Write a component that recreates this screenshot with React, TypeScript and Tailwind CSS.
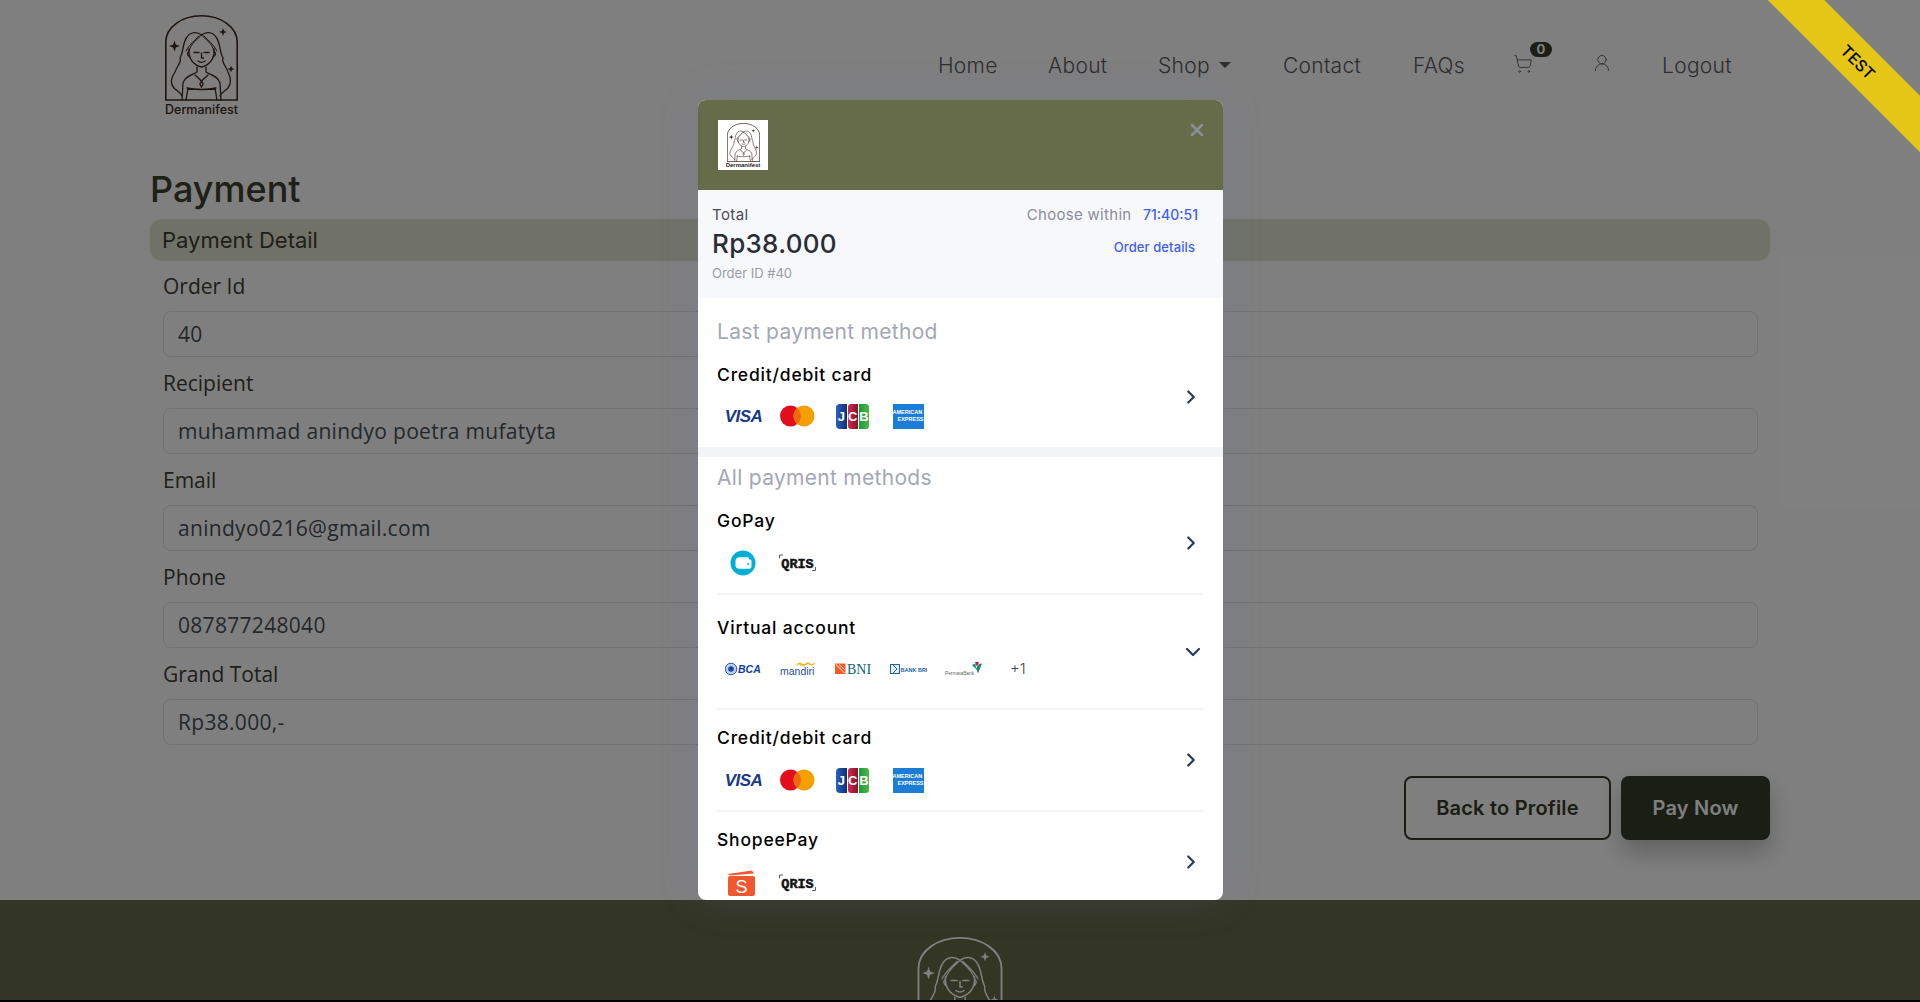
import type { ReactNode } from 'react';
import { ChevronDown, ChevronRight, ShoppingCart, UserRound, X } from 'lucide-react';

function Sparkle({ x, y, r }: { x: number; y: number; r: number }) {
  const k = r * 0.25;
  return (
    <path
      d={`M${x} ${y - r}L${x + k} ${y - k}L${x + r} ${y}L${x + k} ${y + k}L${x} ${y + r}L${x - k} ${y + k}L${x - r} ${y}L${x - k} ${y - k}Z`}
      fill="currentColor"
      stroke="none"
    />
  );
}

function Logo({ className }: { className: string }) {
  return (
    <svg viewBox="0 0 73 86" fill="none" stroke="currentColor" strokeWidth="1.3" strokeLinecap="round" className={className}>
      <path strokeWidth="1.6" d="M.8 85V27C.8 12 17 .8 36.5.8S72.2 12 72.2 27V85M0 85H73" />
      <Sparkle x={9.500} y={31} r={5.500} />
      <Sparkle x={58} y={17} r={4} />
      <Sparkle x={66} y={54} r={3.600} />
      <path d="M36.500 20C33 17 26 16 22 22 17 29 19 36 15 43 17 47 12 51 10 57 6 63 5 69 9 73 12 76 15 77 17 81" />
      <path d="M36.500 20C40 17 47 16 51 22 56 29 54 36 58 43 56 47 61 51 63 57 66 63 66 69 63 73 60 76 57 77 55 81" />
      <path d="M36.500 20C33 24 26 28 24 36M36.500 20C40 24 47 28 49 36M34 21C30 25 24 30 21 36M39 21C43 25 49 30 52 36" strokeWidth="1" />
      <path d="M24 34C23 43 28 50 36.500 52 45 50 50 43 49 34" />
      <path d="M24 37C22 37 22 41 25 42M49 37C51 37 51 41 48 42" />
      <path d="M29 37.500H34M39 37.500H44M36.500 38V43H38.500M33 46C35 47.500 38 47.500 40 46" />
      <path d="M32 52V57C27 60 20 61 18 68L17 85M41 52V57C46 60 53 61 55 68L56 85" />
      <path d="M30 60L36.500 66 43 60M36.500 66L34.800 69 36.500 72 38.200 69Z" />
      <path d="M22 73C30 75 43 75 51 73M23 73L21 85M50 73L52 85" />
    </svg>
  );
}

function Visa() {
  return (
    <svg viewBox="0 0 37 26" className="h-[26px] w-[37px]">
      <text x="18.500" y="19" textAnchor="middle" fontFamily="Liberation Sans" fontSize="17" fontWeight="700" fontStyle="italic" fill="#1a3a85" letterSpacing="-.6">
        VISA
      </text>
    </svg>
  );
}

function Mastercard() {
  return (
    <svg viewBox="0 0 37 26" className="h-[26px] w-[37px]">
      <circle cx="10.500" cy="13" r="10.500" fill="#e30d1c" />
      <circle cx="24" cy="13" r="10.500" fill="#f59f00" />
      <path d="M17.200 5a10.500 10.500 0 0 1 0 16 10.500 10.500 0 0 1 0-16Z" fill="#ee6a10" />
    </svg>
  );
}

function Jcb() {
  return (
    <div className="ml-[-2px] flex h-[25px] w-[33px] items-stretch gap-[1px] font-['Liberation_Sans'] text-[13px] font-bold leading-[25px] text-white">
      <span className="w-[10.5px] rounded-l-[4px] bg-linear-to-r from-[#2a62b8] to-[#0c2f7c] text-center">J</span>
      <span className="w-[10.5px] rounded-l-[3px] bg-linear-to-r from-[#d42a4c] to-[#86122e] text-center">C</span>
      <span className="w-[10px] rounded-r-[3px] bg-linear-to-r from-[#159a3c] to-[#4cb848] text-center">B</span>
    </div>
  );
}

function Amex() {
  return (
    <div className="ml-[-1px] flex h-[25px] w-[31px] flex-col justify-center bg-[#1b7dd6] font-['Liberation_Sans'] text-[5.5px] font-bold leading-[7px] text-white">
      <span className="text-left">AMERICAN</span>
      <span className="text-right">EXPRESS</span>
    </div>
  );
}

function Cards() {
  return (
    <>
      <Visa />
      <Mastercard />
      <span className="flex w-[37px] justify-center"><Jcb /></span>
      <span className="flex w-[37px] justify-center"><Amex /></span>
    </>
  );
}

function GopayIcon() {
  return (
    <svg viewBox="0 0 37 26" className="h-[26px] w-[37px]">
      <circle cx="18" cy="13" r="12.500" fill="#00aed6" />
      <path d="M10.500 11c0-2.500 1.500-3.800 3.800-3.800h9l1 2.300h-9.500 10c1 0 1.700.7 1.700 1.700v5c0 1.500-1 2.600-2.600 2.600h-9.600c-2.300 0-3.800-1.400-3.800-3.500Z" fill="#fff" />
      <circle cx="23" cy="14" r="1" fill="#00aed6" />
    </svg>
  );
}

function ShopeeIcon() {
  return (
    <svg viewBox="0 0 37 26" className="h-[26px] w-[37px]">
      <path d="M3 4 27 .5 29 3.500 4.500 5.500Z" fill="#f1582f" />
      <rect x="3" y="6" width="27" height="20" rx="2" fill="#f1582f" />
      <text x="16.500" y="23" textAnchor="middle" fontFamily="Liberation Sans" fontSize="18" fill="#fff">S</text>
    </svg>
  );
}

function Qris() {
  return (
    <svg viewBox="0 0 37 26" className="ml-[-1px] mr-[1px] h-[26px] w-[37px]">
      <path d="M.5 8.500V5H4M36.500 17V20.500H33" fill="none" stroke="#333" strokeWidth=".8" />
      <text x="18.500" y="18" textAnchor="middle" fontFamily="Liberation Mono" fontSize="13.500" fontWeight="700" fill="#111" stroke="#111" strokeWidth=".5">
        QRIS
      </text>
    </svg>
  );
}

function Bca() {
  return (
    <svg viewBox="0 0 37 26" className="h-[26px] w-[37px]">
      <circle cx="6" cy="13" r="5.800" fill="#bcd0ec" stroke="#2b5cab" />
      <circle cx="6" cy="13" r="2.800" fill="#17479e" />
      <text x="13" y="17" fontFamily="Liberation Sans" fontSize="10.500" fontWeight="700" fontStyle="italic" fill="#0f3d9a">BCA</text>
    </svg>
  );
}

function Mandiri() {
  return (
    <svg viewBox="0 0 37 26" className="h-[26px] w-[37px]">
      <path d="M16 9c3-3 4-3 6-1.500s3 .5 4-.5 2-1 4 .5 3 0 6-1.500c-2 3.500-4 4-6 3s-3-1-4 0-3 2-5 .5-3-1-5 0Z" fill="#f6b71f" />
      <text x="0" y="19" fontFamily="Liberation Sans" fontSize="10.500" fill="#25508f">mandiri</text>
    </svg>
  );
}

function Bni() {
  return (
    <svg viewBox="0 0 37 26" className="h-[26px] w-[37px]">
      <rect x="0" y="7.500" width="10.500" height="10.500" fill="#f15a29" />
      <path d="M1 8.500l8.500 8.500M4 8.500l5.500 5" stroke="#fff" strokeWidth=".9" />
      <text x="12" y="18" fontFamily="Liberation Serif" fontSize="14" fill="#0d6673">BNI</text>
    </svg>
  );
}

function Bri() {
  return (
    <svg viewBox="0 0 37 26" className="h-[26px] w-[37px]">
      <rect x=".5" y="8.500" width="9" height="9" fill="#e6eef8" stroke="#1d62ac" />
      <path d="M3 9l4 4-4 4" fill="none" stroke="#1d62ac" />
      <text x="10.500" y="15.500" fontFamily="Liberation Sans" fontSize="5.500" fontWeight="700" fill="#1d62ac">BANK BRI</text>
    </svg>
  );
}

function Permata() {
  return (
    <svg viewBox="0 0 37 26" className="h-[26px] w-[37px]">
      <text x="0" y="19" fontFamily="Liberation Sans" fontSize="4.800" fill="#666">PermataBank</text>
      <path d="M27 9l3.500-1.500L31 13Z" fill="#0a8f7f" />
      <path d="M30 6h4l-2 5Z" fill="#c8202f" />
      <path d="M34 8l3-.5-4 10-2-5Z" fill="#17896f" />
    </svg>
  );
}

function Method({
  name,
  expanded,
  className,
  logosClassName,
  children,
}: {
  name: string;
  expanded?: boolean;
  className: string;
  logosClassName: string;
  children: ReactNode;
}) {
  return (
    <div className={`flex items-center justify-between ${className}`}>
      <div className="self-start">
        <div className="h-[24px] text-[17.5px] font-medium leading-[24px] tracking-[.8px] text-black">{name}</div>
        <div className={`flex h-[26px] items-center gap-[18px] pl-[8px] ${logosClassName}`}>{children}</div>
      </div>
      {expanded ? (
        <ChevronDown size={24} strokeWidth={2.2} className="mr-[-2px] text-[#2b3a5f]" />
      ) : (
        <ChevronRight size={22} strokeWidth={2.4} className="mr-px text-[#2b3a5f]" />
      )}
    </div>
  );
}

function Field({ label, value }: { label: string; value: string }) {
  return (
    <div className="mt-[12px] first:mt-[11px]">
      <div className="text-[21px] leading-[28px] text-[#3c4032]">{label}</div>
      <div className="mt-[11px] h-[46px] rounded-[8px] border border-[#dee2e6] px-[14px] text-[21px] leading-[44px] tracking-[.3px] text-[#495057]">
        {value}
      </div>
    </div>
  );
}

const links = [
  { label: 'Home', w: 'w-[59px]' },
  { label: 'About', w: 'w-[59px]' },
];

export default function App() {
  return (
    <div className="relative flex h-[1002px] w-[1920px] flex-col overflow-hidden bg-white font-['Inter',sans-serif]">
      <main className="grow px-[150px]">
        <header className="flex h-[166px] items-start">
          <div className="ml-[15px] mt-[15px] w-[73px]">
            <Logo className="h-[86px] w-[73px] text-[#3c2820]" />
            <div className="mt-[1px] whitespace-nowrap text-center text-[12.5px] font-medium leading-[16px] text-[#3c2820]">Dermanifest</div>
          </div>
          <nav className="ml-auto mr-[40px] mt-[52px] flex h-[28px] items-center whitespace-nowrap text-[21px] font-light leading-[28px] tracking-[.3px] text-[#5c5c5c]">
            {links.map((l) => (
              <a key={l.label} className={`${l.w} mr-[51px] text-center`}>{l.label}</a>
            ))}
            <a className="flex w-[73px] items-center justify-between">
              Shop
              <span className="mb-[3px] border-x-[6px] border-t-[6px] border-x-transparent border-t-[#5c5c5c]" />
            </a>
            <a className="ml-[50px] w-[82px] text-center">Contact</a>
            <a className="ml-[50px] w-[49px] text-center">FAQs</a>
            <a className="relative ml-[52px] w-[18px]">
              <ShoppingCart size={20} strokeWidth={1.1} className="mb-[5px] ml-[-1px]" />
              <span className="absolute left-[16px] top-[-12px] h-[15px] w-[22px] rounded-full bg-[#343c28] text-center text-[13px] font-bold leading-[15px] tracking-normal text-white">0</span>
            </a>
            <a className="ml-[62px] w-[16px]">
              <UserRound size={20} strokeWidth={1.1} className="mb-[7px] ml-[-2px]" />
            </a>
            <a className="ml-[52px] w-[68px] text-center">Logout</a>
          </nav>
        </header>
        <h1 className="mt-[1px] text-[36px] font-medium leading-[44px] text-[#3a4230]">Payment</h1>
        <div className="mt-[8px] h-[42px] rounded-[12px] bg-[#e0e4d0] px-[12px] text-[22px] leading-[42px] text-[#3c4032]">
          Payment Detail
        </div>
        <div className="pl-[13px] pr-[12px] font-['Open_Sans',sans-serif]">
          <Field label="Order Id" value="40" />
          <Field label="Recipient" value="muhammad anindyo poetra mufatyta" />
          <Field label="Email" value="anindyo0216@gmail.com" />
          <Field label="Phone" value="087877248040" />
          <Field label="Grand Total" value="Rp38.000,-" />
        </div>
        <div className="mt-[31px] flex justify-end gap-[10px] text-[20px] font-semibold tracking-[.2px]">
          <button className="h-[64px] w-[207px] rounded-[8px] border-2 border-[#343c28] text-[#343c28]">Back to Profile</button>
          <button className="h-[64px] w-[149px] rounded-[8px] bg-[#343c28] text-white shadow-[0_12px_24px_rgba(0,0,0,.25)]">Pay Now</button>
        </div>
      </main>

      <footer className="flex h-[100px] shrink-0 justify-center overflow-hidden bg-[#666b4a] pt-[37px]">
        <Logo className="h-[100px] w-[86px] shrink-0 text-white" />
      </footer>
      <div className="h-[2px] shrink-0 bg-black" />

      <div className="absolute inset-0 bg-black/50" />

      <div className="absolute left-[1708px] top-[42px] h-[40px] w-[300px] rotate-45 bg-[#e5c616] text-center text-[16px] font-medium leading-[40px] text-black">
        TEST
      </div>

      <div className="absolute left-[698px] top-[100px] h-[800px] w-[525px] overflow-hidden rounded-[8px] bg-white shadow-[0_0_40px_rgba(110,120,170,.2)]">
        <div className="flex h-[90px] items-start justify-between bg-[#666b4a] pl-[20px] pr-[16px] pt-[20px]">
          <div className="flex h-[50px] w-[50px] flex-col items-center bg-white pt-[3px]">
            <Logo className="h-[39px] w-[33px] text-[#3c2820]" />
            <span className="font-['Liberation_Sans'] text-[6px] font-bold leading-[7px] text-[#222]">Dermanifest</span>
          </div>
          <X size={20} strokeWidth={3} className="text-[#8b8f9c]" />
        </div>

        <div className="flex h-[108px] justify-between bg-[#f7f8fb] pl-[14px] pr-[25px] pt-[15px]">
          <div>
            <div className="text-[15px] leading-[20px] tracking-[.4px] text-[#4a4b57]">Total</div>
            <div className="text-[26px] font-medium leading-[38px] tracking-[.3px] text-[#2b2d36]">Rp38.000</div>
            <div className="mt-[1px] text-[13px] leading-[18px] text-[#9a9ca8]">Order ID #40</div>
          </div>
          <div className="text-right">
            <div className="text-[15px] leading-[20px] tracking-[.3px] text-[#8a8c9a]">
              Choose within <span className="ml-[7px] text-[14px] font-medium tracking-normal text-[#3f5efb]">71:40:51</span>
            </div>
            <div className="mr-[3px] mt-[12px] text-[13px] font-medium leading-[20px] tracking-[.1px] text-[#3f5efb]">Order details</div>
          </div>
        </div>

        <div className="h-[149px] pl-[19px] pr-[20px] pt-[20px]">
          <div className="text-[21px] leading-[28px] tracking-[.3px] text-[#a4a7b5]">Last payment method</div>
          <Method name="Credit/debit card" className="mt-[17px] h-[68px]" logosClassName="mt-[16px]">
            <Cards />
          </Method>
        </div>
        <div className="h-[10px] bg-[#f3f4f6]" />

        <div className="pl-[19px] pr-[20px] pt-[7px]">
          <div className="text-[21px] leading-[28px] tracking-[.3px] text-[#a4a7b5]">All payment methods</div>
          <Method name="GoPay" className="mt-[17px] h-[68px]" logosClassName="mt-[17px]">
            <GopayIcon />
            <Qris />
          </Method>
          <div className="mt-[16px] h-[2px] bg-[#f3f4f6]" />
          <Method name="Virtual account" expanded className="mt-[21px] h-[72px]" logosClassName="mt-[16px]">
            <Bca />
            <Mandiri />
            <Bni />
            <Bri />
            <Permata />
            <span className="ml-[10px] w-[37px] text-[15px] font-light text-[#444]">+1</span>
          </Method>
          <div className="mt-[20px] h-[2px] bg-[#f3f4f6]" />
          <Method name="Credit/debit card" className="mt-[16px] h-[68px]" logosClassName="mt-[17px]">
            <Cards />
          </Method>
          <div className="mt-[16px] h-[2px] bg-[#f3f4f6]" />
          <Method name="ShopeePay" className="mt-[16px] h-[68px]" logosClassName="mt-[18px]">
            <ShopeeIcon />
            <Qris />
          </Method>
        </div>
      </div>
    </div>
  );
}
